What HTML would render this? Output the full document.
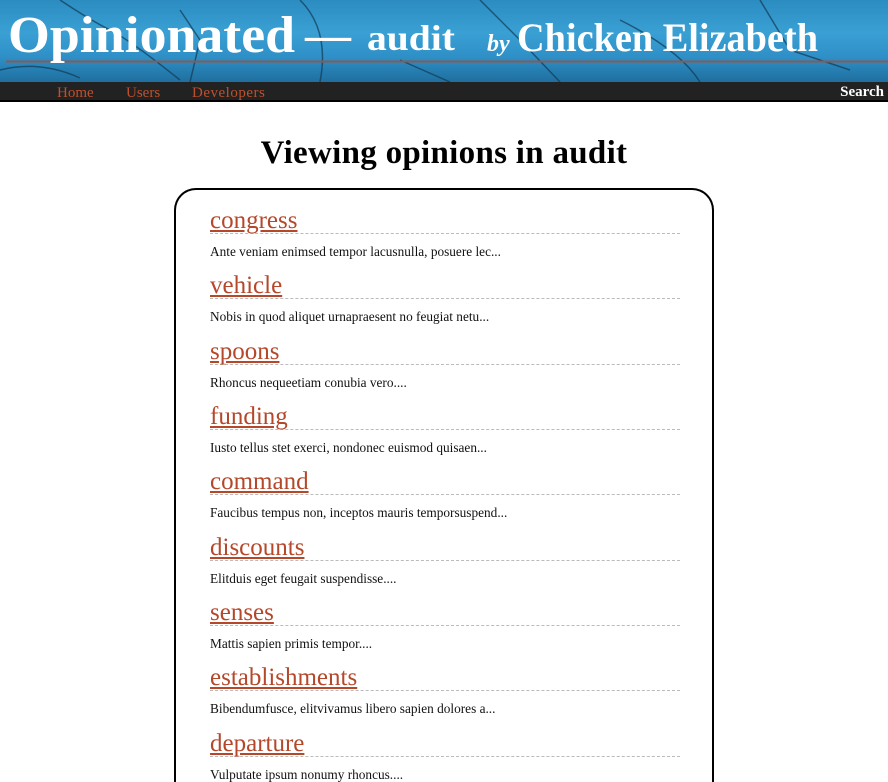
<!DOCTYPE html>
<html><head><meta charset="utf-8"><style>
html,body{margin:0;padding:0;background:#fff;width:888px;height:782px;overflow:hidden;font-family:"Liberation Serif",serif}
#wrap{position:relative;width:888px;height:782px;overflow:hidden}
#hdr{position:absolute;left:0;top:0;width:888px;height:82px;background:linear-gradient(180deg,#2b8cc0 0%,#3aa0d4 40%,#2e8fc6 70%,#1f6f9f 100%)}
#nav{position:absolute;left:0;top:82px;width:888px;height:18px;background:#222;border-bottom:2px solid #000}
#nav a{position:absolute;top:2px;font-size:15px;line-height:18px;color:#c0502c;text-decoration:none}
#nav .s{color:#fff;font-weight:bold;right:4px;top:1px}
h1{position:absolute;top:135px;left:0;width:888px;text-align:center;margin:0;font-size:33px;line-height:36px;font-weight:bold;color:#000;letter-spacing:.3px}
#box{position:absolute;left:174px;top:188px;width:536px;height:594px;border:2px solid #000;border-bottom:none;border-radius:22px 22px 0 0}
.it{position:absolute;left:34px;width:470px}
.it h2{margin:0;font-size:25px;line-height:26px;font-weight:normal;border-bottom:1px dashed #bbb;height:25px}
.it h2 a{color:#b5472a;text-decoration:underline}
.it p{margin:0;position:absolute;top:37px;font-size:13.3px;line-height:14px;color:#111}
</style></head><body><div id="wrap">
<div id="hdr">
<svg width="888" height="82" style="position:absolute;left:0;top:0">
<g stroke="#123a55" stroke-width="1.5" fill="none" opacity=".7">
<path d="M60 0 Q90 20 110 30 T180 80"/><path d="M180 10 L200 40 L190 82"/><path d="M300 0 Q330 30 320 82"/><path d="M480 0 L520 40 L560 82"/><path d="M620 20 Q680 50 700 82"/><path d="M760 0 L790 50 L850 70"/><path d="M0 70 Q40 60 80 78"/><path d="M400 60 L450 82"/>
</g>
<line x1="6" y1="61.5" x2="888" y2="61.5" stroke="#8a5a52" stroke-width="2"/>
<g fill="#fff" font-family="Liberation Serif,serif" font-weight="bold">
<text x="8" y="52" font-size="52" textLength="287" lengthAdjust="spacingAndGlyphs">Opinionated</text>
<text x="305" y="50" font-size="46">—</text>
<text x="367" y="50" font-size="36" textLength="88" lengthAdjust="spacingAndGlyphs">audit</text>
<text x="487" y="51" font-size="24" font-style="italic">by</text>
<text x="517" y="51" font-size="40" textLength="301" lengthAdjust="spacingAndGlyphs">Chicken Elizabeth</text>
</g>
</svg>
</div>
<div id="nav"><a style="left:57px">Home</a><a style="left:126px">Users</a><a style="left:192px;letter-spacing:.5px">Developers</a><a class="s">Search</a></div>
<h1>Viewing opinions in audit</h1>
<div id="box">
<div class="it" style="top:18px"><h2><a>congress</a></h2><p>Ante veniam enimsed tempor lacusnulla, posuere lec...</p></div>
<div class="it" style="top:83px"><h2><a>vehicle</a></h2><p>Nobis in quod aliquet urnapraesent no feugiat netu...</p></div>
<div class="it" style="top:149px"><h2><a>spoons</a></h2><p>Rhoncus nequeetiam conubia vero....</p></div>
<div class="it" style="top:214px"><h2><a>funding</a></h2><p>Iusto tellus stet exerci, nondonec euismod quisaen...</p></div>
<div class="it" style="top:279px"><h2><a>command</a></h2><p>Faucibus tempus non, inceptos mauris temporsuspend...</p></div>
<div class="it" style="top:345px"><h2><a>discounts</a></h2><p>Elitduis eget feugait suspendisse....</p></div>
<div class="it" style="top:410px"><h2><a>senses</a></h2><p>Mattis sapien primis tempor....</p></div>
<div class="it" style="top:475px"><h2><a>establishments</a></h2><p>Bibendumfusce, elitvivamus libero sapien dolores a...</p></div>
<div class="it" style="top:541px"><h2><a>departure</a></h2><p>Vulputate ipsum nonumy rhoncus....</p></div>
</div>
</div></body></html>
